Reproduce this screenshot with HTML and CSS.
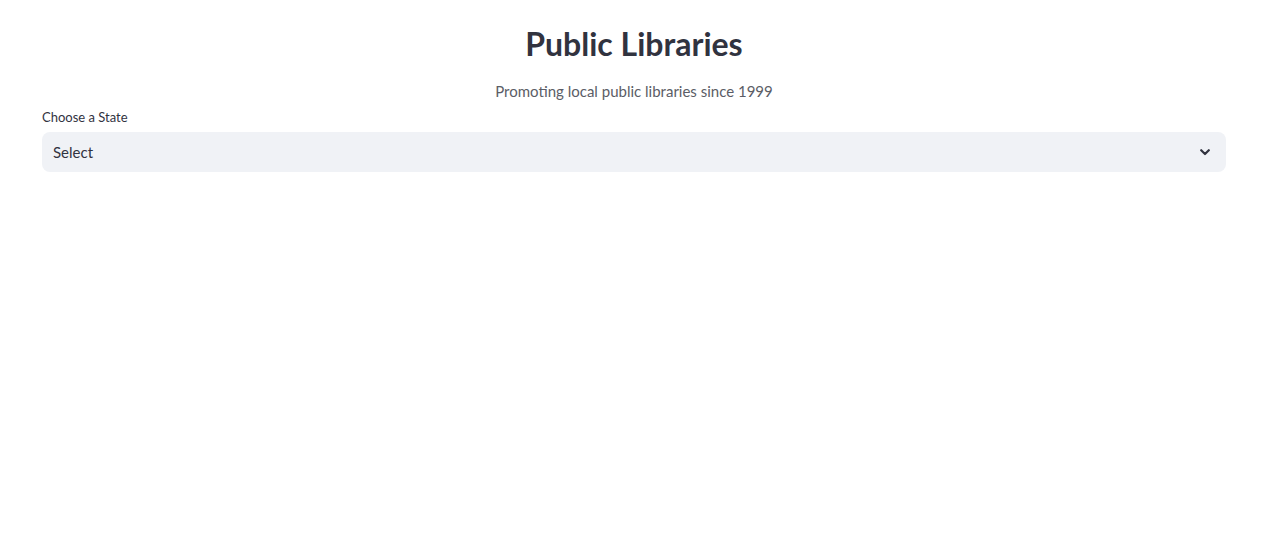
FILE: index.html
```html
<!DOCTYPE html>
<html>
<head>
<meta charset="utf-8">
<link rel="stylesheet" href="styles.css">
</head>
<body>
<main class="app">
  <h1 class="title">Public Libraries</h1>
  <p class="subtitle">Promoting local public libraries since 1999</p>
  <div class="field">
    <label class="label">Choose a State</label>
    <div class="select">
      <span class="select-value">Select</span>
      <svg class="chevron" width="10" height="7" viewBox="0 0 10 7"><path d="M1.2 1.2 L5 5 L8.8 1.2" fill="none" stroke="#31333f" stroke-width="2.2" stroke-linecap="round" stroke-linejoin="round"/></svg>
    </div>
  </div>
</main>
</body>
</html>
```
FILE: styles.css
```css
html, body {
  margin: 0;
  padding: 0;
  background: #ffffff;
}
body {
  font-family: "Lato", "Noto Sans", sans-serif;
  color: #31333f;
}
.app {
  padding: 24px 54px 0 42px;
  display: flex;
  flex-direction: column;
}
.title {
  margin: 0;
  text-align: center;
  font-size: 32px;
  font-weight: 700;
  line-height: 40px;
  color: #31333f;
}
.subtitle {
  margin: 15px 0 0 0;
  text-align: center;
  font-size: 15px;
  line-height: 24px;
  color: #5b5d66;
}
.field {
  margin-top: 4px;
  display: flex;
  flex-direction: column;
}
.label {
  font-size: 13px;
  line-height: 20px;
  color: #31333f;
  margin-bottom: 5px;
}
.select {
  height: 40px;
  background: #f0f2f6;
  border-radius: 8px;
  display: flex;
  align-items: center;
  justify-content: space-between;
  padding: 0 16px 0 11px;
}
.select-value {
  font-size: 15px;
  color: #31333f;
}
.chevron {
  display: block;
}
```
